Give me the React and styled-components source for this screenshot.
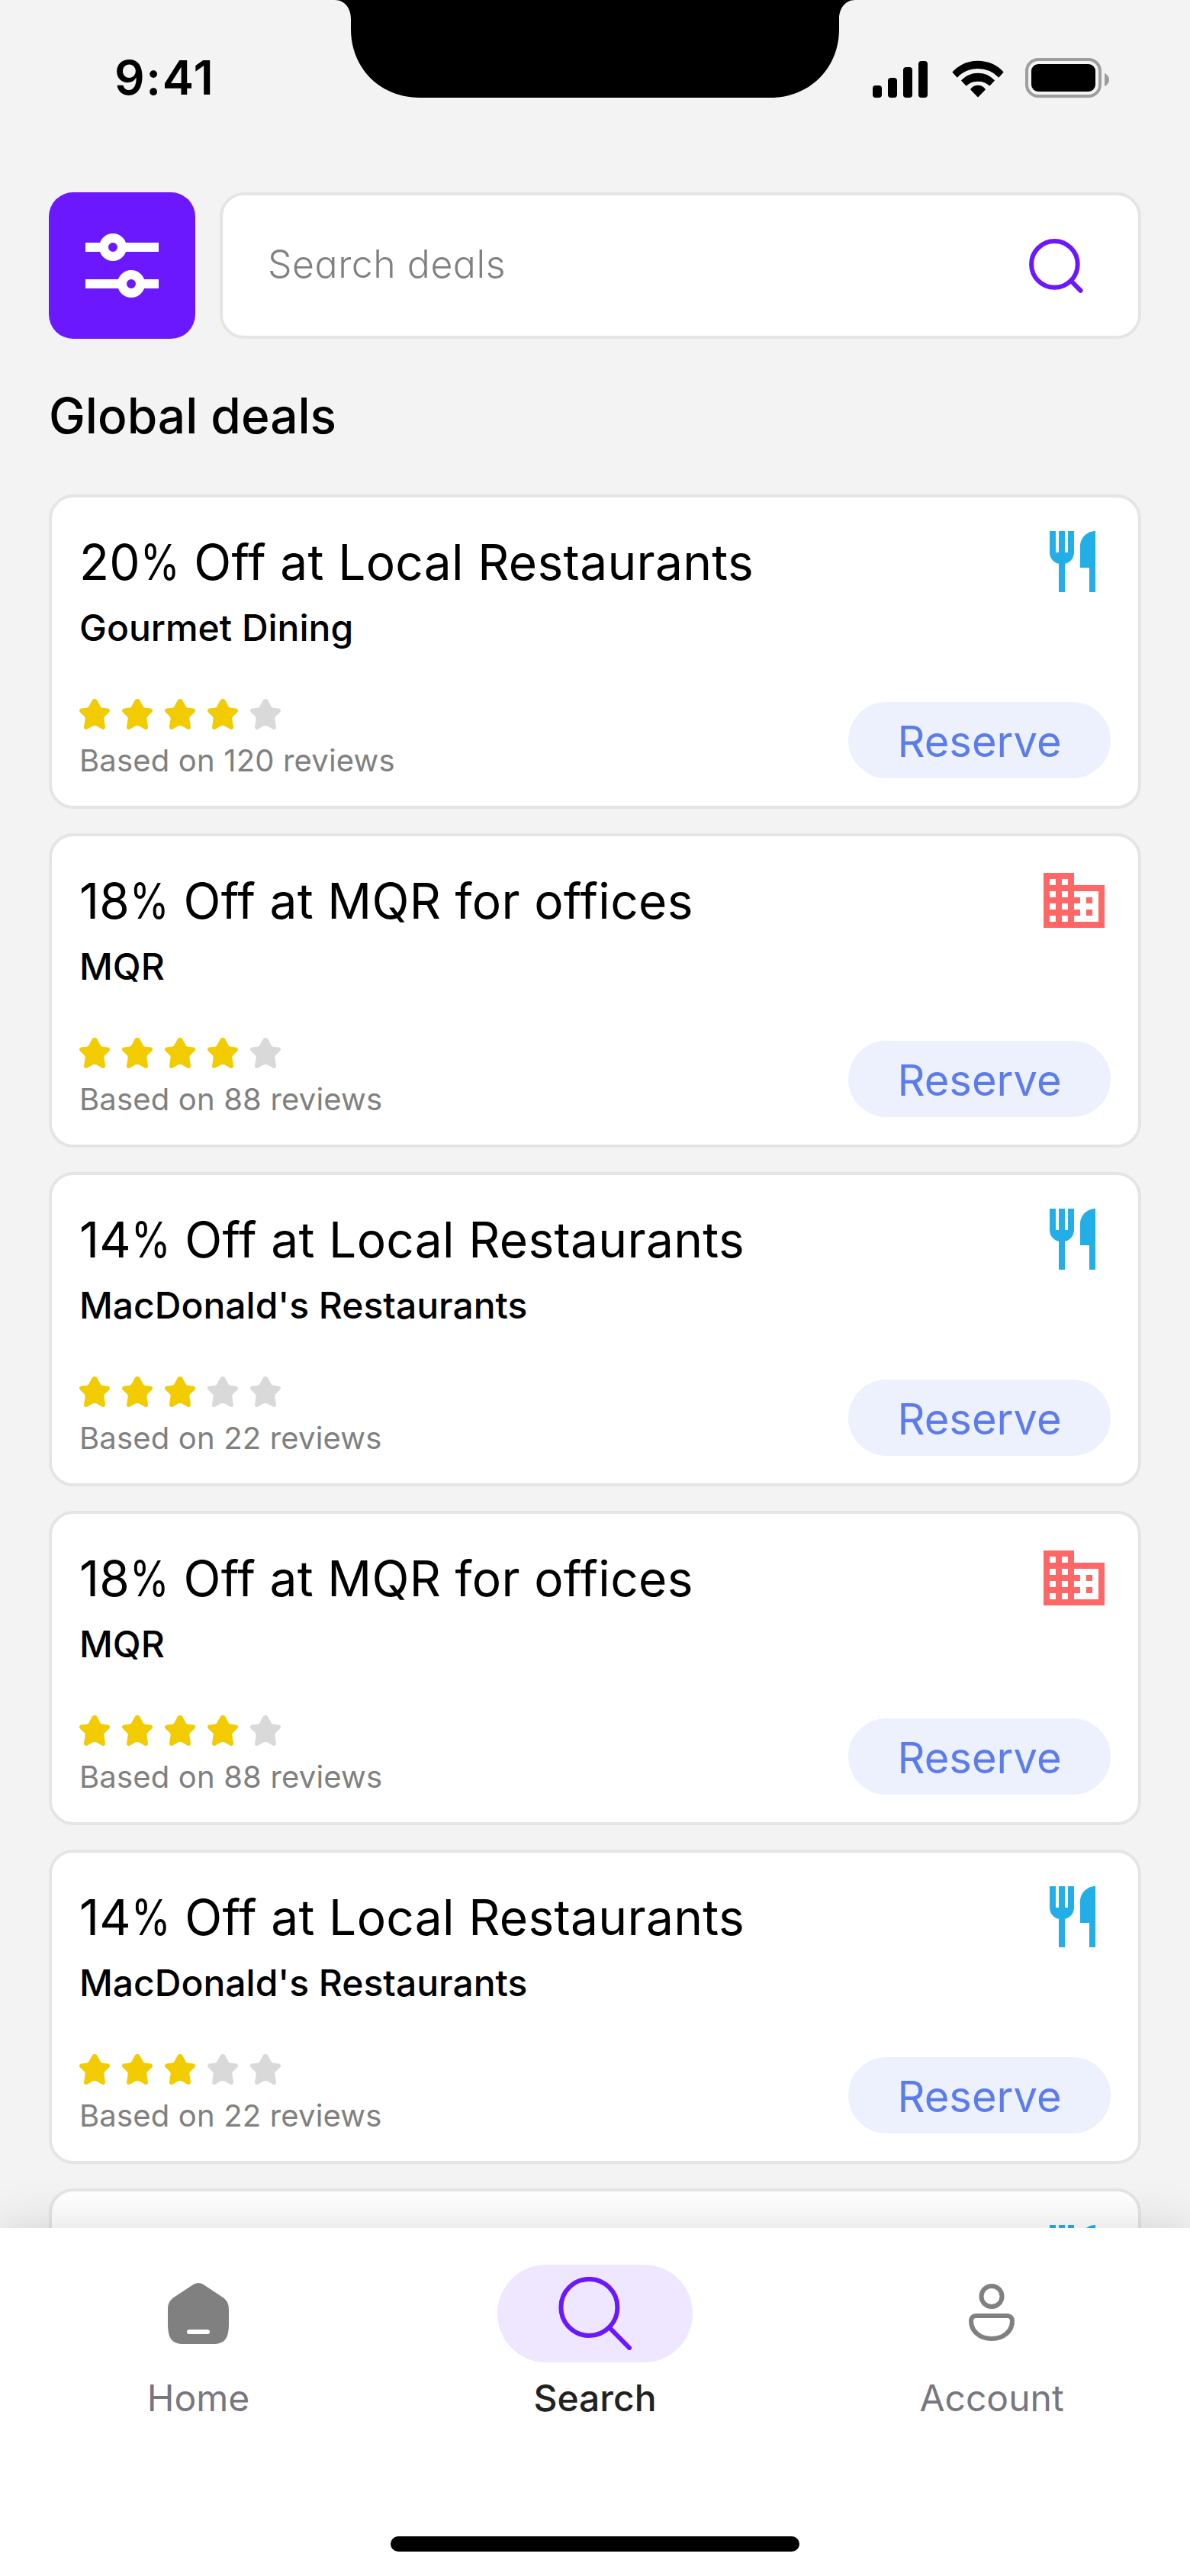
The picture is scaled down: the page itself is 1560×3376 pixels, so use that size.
import React from "react";
import styled, { createGlobalStyle } from "styled-components";

const GlobalStyle = createGlobalStyle`
  *, *::before, *::after { box-sizing: border-box; }
  body { margin: 0; background: #f3f3f3; }
`;

const Screen = styled.div`
  display: flex;
  flex-direction: column;
  width: 1560px;
  height: 3376px;
  overflow: hidden;
  background: #f3f3f3;
  color: #000;
  font-family: Inter, "Liberation Sans", sans-serif;
`;

/* Status bar */

const StatusBar = styled.header`
  display: grid;
  grid-template-columns: 439px 682px 439px;
  align-items: start;
  flex: none;
  height: 188px;
`;

const Clock = styled.time`
  padding: 64px 0 0 150px;
  font-size: 62px;
  font-weight: 600;
  line-height: 76px;
  letter-spacing: 1.6px;
`;

const Notch = styled.svg`
  display: block;
  width: 682px;
  height: 128px;
`;

const Indicators = styled.div`
  display: flex;
  padding: 76px 0 0 23px;
`;

const Indicator = styled.svg`
  display: block;
  flex: none;
  width: ${(p) => p.$width}px;
  height: 52px;
  margin-right: ${(p) => p.$gap || 0}px;
`;

/* Search row and deals */

const Content = styled.main`
  display: flex;
  flex-direction: column;
  flex: 1;
  min-height: 0;
  overflow: hidden;
  padding: 64px 64px 0;
`;

const SearchRow = styled.div`
  display: flex;
  gap: 32px;
  flex: none;
  height: 192px;
`;

const FilterButton = styled.button`
  display: flex;
  align-items: center;
  justify-content: center;
  width: 192px;
  padding: 0;
  border: 0;
  border-radius: 32px;
  background: #6b18ff;
`;

const SearchField = styled.div`
  display: flex;
  flex: 1;
  align-items: center;
  justify-content: space-between;
  padding: 0 72px 0 59px;
  border: 4px solid #e5e5e5;
  border-radius: 32px;
  background: #fff;
`;

const Placeholder = styled.span`
  padding-bottom: 4px;
  color: #808080;
  font-size: 50px;
  font-weight: 300;
  letter-spacing: 0.5px;
  font-feature-settings: "cv11";
`;

const Icon = styled.svg`
  display: block;
  flex: none;
  width: ${(p) => p.$width}px;
  height: ${(p) => p.$height || p.$width}px;
  color: ${(p) => p.$color || "#808080"};
`;

const SectionTitle = styled.h2`
  flex: none;
  margin: 62px 0 64px;
  font-size: 64px;
  font-weight: 500;
  line-height: 78px;
`;

const DealList = styled.section`
  display: flex;
  flex-direction: column;
  gap: 32px;
`;

const Card = styled.article`
  display: flex;
  justify-content: space-between;
  flex: none;
  height: 412px;
  padding: 36px;
  border: 4px solid #e5e5e5;
  border-radius: 32px;
  background: #fff;
`;

const CardInfo = styled.div`
  display: flex;
  flex-direction: column;
  padding-top: 10px;
`;

const CardActions = styled.div`
  display: flex;
  flex-direction: column;
  align-items: flex-end;
  justify-content: space-between;
  margin-left: auto;
`;

const DealTitle = styled.h3`
  margin: 0 0 18px;
  font-size: 64px;
  font-weight: 400;
  line-height: 78px;
  letter-spacing: 0.32px;
`;

/* Condensed percent sign, drawn narrower than the font's own */
const Percent = styled.span`
  display: inline-block;
  margin-right: -0.177em;
  transform: scaleX(0.82);
  transform-origin: left;
`;

const Vendor = styled.div`
  margin-bottom: 64px;
  font-size: 48px;
  font-weight: 500;
  line-height: 58px;
`;

const Stars = styled.div`
  display: flex;
  gap: 16px;
  margin-bottom: 16px;
`;

const Reviews = styled.div`
  color: #808080;
  font-size: 40px;
  line-height: 50px;
  letter-spacing: 0.17px;
`;

const ReserveButton = styled.button`
  display: flex;
  align-items: center;
  justify-content: center;
  width: 344px;
  height: 100px;
  padding: 3px 0 0;
  border: 0;
  border-radius: 50px;
  background: #edf1fd;
  color: #5c7ceb;
  font: 400 56px Inter, "Liberation Sans", sans-serif;
`;

/* Bottom navigation */

const BottomBar = styled.footer`
  position: relative;
  display: flex;
  flex-direction: column;
  align-items: center;
  flex: none;
  height: 456px;
  padding: 48px 0 32px;
  background: #fff;
  box-shadow: 0 0 60px rgba(0, 0, 0, 0.14);
`;

const NavItems = styled.nav`
  display: grid;
  grid-template-columns: repeat(3, 1fr);
  width: 100%;
`;

const NavItem = styled.a`
  display: flex;
  flex-direction: column;
  align-items: center;
  gap: 16px;
  color: ${(p) => (p.$active ? "#222222" : "#79767f")};
  font-size: 48px;
  font-weight: ${(p) => (p.$active ? 500 : 400)};
  line-height: 61px;
`;

const NavIcon = styled.span`
  display: flex;
  align-items: center;
  justify-content: center;
  width: 256px;
  height: 128px;
  border-radius: 64px;
  background: ${(p) => (p.$active ? "#efe7ff" : "transparent")};
`;

const HomeIndicator = styled.div`
  width: 536px;
  height: 20px;
  margin-top: auto;
  border-radius: 10px;
  background: #000;
`;

const STAR =
  "M16.8 1.8C18.2-.6 21.8-.6 23.2 1.8L27.2 9.2C27.9 10.6 28.8 11.4 30.4 11.7L37.2 12.6C40 13 40.9 15.5 39 17.6L33.8 22.6C32.7 23.8 32.2 25 32.4 26.6L33.9 36.2C34.3 39.2 32.2 40.8 29.5 39.4L22.6 35.6C20.8 34.8 19.2 34.8 17.4 35.6L10.5 39.4C7.8 40.8 5.7 39.2 6.1 36.2L7.6 26.6C7.8 25 7.3 23.8 6.2 22.6L1 17.6C-.9 15.5 0 13 2.8 12.6L9.6 11.7C11.2 11.4 12.1 10.6 12.8 9.2Z";

const Star = ({ filled }) => (
  <Icon $width={40} $color={filled ? "#f2cb00" : "#d9d9d9"} viewBox="0 0 40 40">
    <path fill="currentColor" d={STAR} />
  </Icon>
);

const RestaurantIcon = () => (
  <Icon $width={96} $color="#24aee8" viewBox="0 0 24 24">
    <path
      fill="currentColor"
      d="M4 2H6V9H7V2H9V9H10V2H12V9C12 10.9 10.7 12.4 9 12.7V22H7V12.7C5.3 12.4 4 10.9 4 9ZM19 2V22H17V14H14V7C14 4.24 16.24 2 19 2Z"
    />
  </Icon>
);

const OfficeIcon = () => (
  <Icon $width={96} $color="#ff6666" viewBox="0 0 24 24">
    <path
      fill="currentColor"
      d="M12 7V3H2v18h20V7H12zM6 19H4v-2h2v2zm0-4H4v-2h2v2zm0-4H4V9h2v2zm0-4H4V5h2v2zm4 12H8v-2h2v2zm0-4H8v-2h2v2zm0-4H8V9h2v2zm0-4H8V5h2v2zm10 12h-8v-2h2v-2h-2v-2h2v-2h-2V9h8v10zm-2-8h-2v2h2v-2zm0 4h-2v2h2v-2z"
    />
  </Icon>
);

const CATEGORY_ICONS = { restaurant: RestaurantIcon, office: OfficeIcon };

const local20 = { discount: 20, place: "Local Restaurants", vendor: "Gourmet Dining", rating: 4, reviews: 120, category: "restaurant" };
const office18 = { discount: 18, place: "MQR for offices", vendor: "MQR", rating: 4, reviews: 88, category: "office" };
const local14 = { discount: 14, place: "Local Restaurants", vendor: "MacDonald's Restaurants", rating: 3, reviews: 22, category: "restaurant" };

const DEALS = [local20, office18, local14, office18, local14];

function DealCard({ deal }) {
  const CategoryIcon = CATEGORY_ICONS[deal.category];
  return (
    <Card>
      <CardInfo>
        <DealTitle>
          {deal.discount}
          <Percent>%</Percent>
          {` Off at ${deal.place}`}
        </DealTitle>
        <Vendor>{deal.vendor}</Vendor>
        <Stars>
          {[1, 2, 3, 4, 5].map((n) => (
            <Star key={n} filled={n <= deal.rating} />
          ))}
        </Stars>
        <Reviews>{`Based on ${deal.reviews} reviews`}</Reviews>
      </CardInfo>
      <CardActions>
        <CategoryIcon />
        <ReserveButton>Reserve</ReserveButton>
      </CardActions>
    </Card>
  );
}

export default function App() {
  return (
    <Screen>
      <GlobalStyle />
      <StatusBar>
        <Clock>9:41</Clock>
        <Notch viewBox="0 0 682 128">
          <path d="M0 0C13 0 21 11 21 25V38C21 90 60 128 111 128H571C622 128 661 90 661 38V25C661 11 669 0 682 0Z" />
        </Notch>
        <Indicators>
          <Indicator $width={72} $gap={32} viewBox="0 0 72 52">
            <rect x="0" y="36" width="12" height="16" rx="4" />
            <rect x="20" y="26" width="12" height="26" rx="4" />
            <rect x="40" y="12" width="12" height="40" rx="4" />
            <rect x="60" y="4" width="12" height="48" rx="4" />
          </Indicator>
          <Indicator $width={68} $gap={28} viewBox="0 0 68 52">
            <g stroke="#000" strokeWidth="1.5" strokeLinejoin="round">
              <path d="M1.3 18.4A45.4 45.4 0 0 1 66.7 18.4L61.3 24.6A38.6 38.6 0 0 0 6.7 24.6Z" />
              <path d="M13 29.6A28.8 28.8 0 0 1 55 29.6L49.4 35.6A24 24 0 0 0 18.6 35.6Z" />
              <path d="M25 41.2A11 11 0 0 1 43 41.2L34 50.4Z" />
            </g>
          </Indicator>
          <Indicator $width={110} viewBox="0 0 110 52">
            <rect x="2" y="2" width="96" height="48" rx="15" fill="none" stroke="#9e9e9e" strokeWidth="4" />
            <rect x="8" y="8" width="84" height="36" rx="9" />
            <path fill="#9e9e9e" d="M104 20C107.6 21.4 110 24.8 110 28.5S107.6 35.6 104 37Z" />
          </Indicator>
        </Indicators>
      </StatusBar>

      <Content>
        <SearchRow>
          <FilterButton aria-label="Filter">
            <Icon $width={96} $color="#fff" viewBox="0 0 96 96">
              <g fill="none" stroke="currentColor" strokeWidth="12">
                <path d="M0 24H24M48 24H96M0 72H48M72 72H96" />
                <circle cx="36" cy="24" r="12" />
                <circle cx="60" cy="72" r="12" />
              </g>
            </Icon>
          </FilterButton>
          <SearchField>
            <Placeholder>Search deals</Placeholder>
            <Icon $width={72} $color="#6b18ff" viewBox="0 0 72 72">
              <g fill="none" stroke="currentColor" strokeWidth="6" strokeLinecap="round">
                <circle cx="34.4" cy="34.4" r="30.3" />
                <path d="M55.8 55.8L68.6 68.8" />
              </g>
            </Icon>
          </SearchField>
        </SearchRow>

        <SectionTitle>Global deals</SectionTitle>

        <DealList>
          {DEALS.map((deal, i) => (
            <DealCard key={i} deal={deal} />
          ))}
          <Card>
            <CardActions>
              <RestaurantIcon />
            </CardActions>
          </Card>
        </DealList>
      </Content>

      <BottomBar>
        <NavItems>
          <NavItem>
            <NavIcon>
              <Icon $width={80} viewBox="0 0 80 80">
                <path
                  fill="currentColor"
                  d="M33 2.2C37.5-.6 42.5-.6 47 2.2L70.5 17.8C77 22 80 26 80 35V53C80 72 75.5 80 59 80H21C4.5 80 0 72 0 53V35C0 26 3 22 9.5 17.8Z"
                />
                <rect x="25" y="61" width="30" height="6" rx="3" fill="#fff" />
              </Icon>
            </NavIcon>
            Home
          </NavItem>
          <NavItem $active>
            <NavIcon $active>
              <Icon $width={96} $color="#6b18ff" viewBox="0 0 96 96">
                <g fill="none" stroke="currentColor" strokeWidth="6" strokeLinecap="round">
                  <circle cx="40.4" cy="39.9" r="37" />
                  <path d="M66.6 66.2L93 93" />
                </g>
              </Icon>
            </NavIcon>
            Search
          </NavItem>
          <NavItem>
            <NavIcon>
              <Icon $width={60} $height={80} viewBox="0 0 60 80">
                <g fill="none" stroke="currentColor" strokeWidth="6">
                  <circle cx="30" cy="17.5" r="13.5" />
                  <path d="M9.5 43H50.5C54.5 43 57 45.5 57 49.5C57 63 46 73 30 73S3 63 3 49.5C3 45.5 5.5 43 9.5 43Z" />
                </g>
              </Icon>
            </NavIcon>
            Account
          </NavItem>
        </NavItems>
        <HomeIndicator />
      </BottomBar>
    </Screen>
  );
}
